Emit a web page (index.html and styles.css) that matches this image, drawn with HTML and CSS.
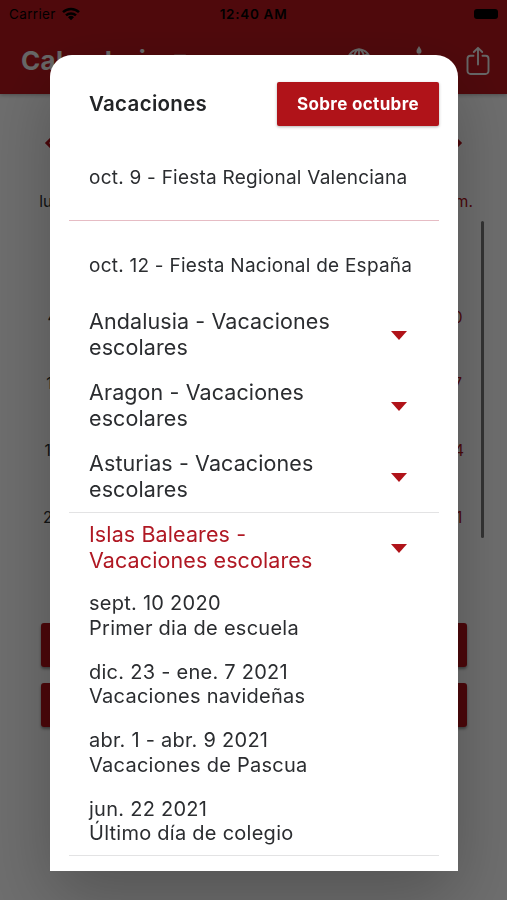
FILE: index.html
```html
<!DOCTYPE html>
<html lang="es">
<head>
    <meta charset="UTF-8">
    <meta name="viewport" content="width=device-width, initial-scale=1.0">
    <title>Calendario</title>
    <link rel="stylesheet" href="styles.css">
</head>
<body>
    <div class="app">
        <header class="header">
            <div class="status-bar">
                <div class="carrier">
                    <span>Carrier</span>
                    <svg width="18" height="14" viewBox="0 0 18 14" fill="none" stroke="#000" stroke-width="2.5">
                        <path d="M1 5.2a11.5 11.5 0 0 1 16 0"/>
                        <path d="M4 8.4a7.3 7.3 0 0 1 10 0"/>
                        <path d="M9 13.3l-3-3.1a4.3 4.3 0 0 1 6 0z" fill="#000" stroke="none"/>
                    </svg>
                </div>
                <span class="time">12:40 AM</span>
                <div class="battery-wrap"><span class="battery"></span></div>
            </div>
            <div class="toolbar">
                <h1>Calendario</h1>
                <svg class="title-arrow" width="12" height="7" viewBox="0 0 12 7"><path d="M0 .6h12L6 7z" fill="#caa"/></svg>
                <div class="actions">
                    <svg width="26" height="26" viewBox="0 0 26 26" fill="none" stroke="#eee" stroke-width="1.8">
                        <circle cx="13" cy="13" r="11.5"/>
                        <ellipse cx="13" cy="13" rx="5.5" ry="11.5"/>
                        <path d="M13 1.5v23M1.5 13h23M4 6c5 3 13 3 18 0M4 20c5-3 13-3 18 0"/>
                    </svg>
                    <svg width="26" height="30" viewBox="0 0 26 30" fill="#eee">
                        <path d="M13 0c1.500 2.500 2.500 3.600 2.500 5.200a2.500 2.500 0 0 1-5 0C10.500 3.600 11.500 2.500 13 0z"/>
                        <path d="M12.200 8.500h1.600V14h-1.600zM3 14h20v14H3z"/>
                    </svg>
                    <svg width="24" height="30" viewBox="0 0 24 30" fill="none" stroke="#eee" stroke-width="1.9" stroke-linecap="round" stroke-linejoin="round">
                        <path d="M7.500 9.800H4.500a3 3 0 0 0-3 3V25a3 3 0 0 0 3 3h15a3 3 0 0 0 3-3V12.800a3 3 0 0 0-3-3h-3"/>
                        <path d="M12 18.500V2M7.800 6L12 1.800 16.200 6"/>
                    </svg>
                </div>
            </div>
        </header>

        <div class="month-nav">
            <svg width="8" height="12" viewBox="0 0 8 12" fill="none" stroke="#b01018" stroke-width="3"><path d="M7 2L3 6l4 4"/></svg>
            <svg width="8" height="12" viewBox="0 0 8 12" fill="none" stroke="#b01018" stroke-width="3"><path d="M1 2l4 4-4 4"/></svg>
        </div>

        <div class="weekdays">
            <span>lun.</span><span>mar.</span><span>mié.</span><span>jue.</span><span>vie.</span><span>sáb.</span><span class="sunday">dom.</span>
        </div>
        <div class="month">
            <div class="days">
                <span></span><span></span><span></span><span></span><span>1</span><span>2</span><span></span>
                <span>4</span><span>5</span><span>6</span><span>7</span><span>8</span><span>9</span><span class="sunday">10</span>
                <span>11</span><span>12</span><span>13</span><span>14</span><span>15</span><span>16</span><span class="sunday">17</span>
                <span>18</span><span>19</span><span>20</span><span>21</span><span>22</span><span>23</span><span class="sunday">24</span>
                <span>25</span><span>26</span><span>27</span><span>28</span><span>29</span><span>30</span><span class="sunday">31</span>
            </div>
            <div class="scrollbar"></div>
        </div>

        <div class="page-buttons">
            <div class="page-button"></div>
            <div class="page-button"></div>
        </div>
    </div>

    <div class="overlay">
        <div class="modal">
            <div class="modal-header">
                <h2>Vacaciones</h2>
                <button class="about-button">Sobre octubre</button>
            </div>

            <div class="holiday first">oct. 9 - Fiesta Regional Valenciana</div>
            <div class="holiday">oct. 12 - Fiesta Nacional de España</div>

            <div class="region">
                <span>Andalusia - Vacaciones escolares</span>
                <i class="arrow"></i>
            </div>
            <div class="region">
                <span>Aragon - Vacaciones escolares</span>
                <i class="arrow"></i>
            </div>
            <div class="region">
                <span>Asturias - Vacaciones escolares</span>
                <i class="arrow"></i>
            </div>

            <div class="open-region">
                <div class="region active">
                    <span>Islas Baleares - Vacaciones escolares</span>
                    <i class="arrow"></i>
                </div>
                <div class="event">
                    <p>sept. 10 2020</p>
                    <p>Primer dia de escuela</p>
                </div>
                <div class="event">
                    <p>dic. 23 - ene. 7 2021</p>
                    <p>Vacaciones navideñas</p>
                </div>
                <div class="event">
                    <p>abr. 1 - abr. 9 2021</p>
                    <p>Vacaciones de Pascua</p>
                </div>
                <div class="event">
                    <p>jun. 22 2021</p>
                    <p>Último día de colegio</p>
                </div>
            </div>
        </div>
    </div>
</body>
</html>
```

FILE: styles.css
```css
* {
    box-sizing: border-box;
}
body {
    margin: 0;
    height: 900px;
    overflow: hidden;
    font-family: Inter, "Liberation Sans", sans-serif;
    color: #2b2d30;
    background: #fff;
}
h1, h2, p {
    margin: 0;
}

/* page behind the dialog */
.header {
    height: 94px;
    background: #b8171d;
    box-shadow: 0 1px 4px rgba(0,0,0,0.3);
}
.status-bar {
    display: grid;
    grid-template-columns: 1fr auto 1fr;
    align-items: center;
    height: 27px;
    padding: 0 9px;
    font-size: 13.5px;
    color: #000;
}
.carrier {
    display: flex;
    align-items: center;
    gap: 6px;
    letter-spacing: 0.35px;
}
.time {
    font-weight: 600;
    letter-spacing: 0.7px;
}
.battery-wrap {
    display: flex;
    justify-content: flex-end;
}
.battery {
    width: 24px;
    height: 10px;
    border-radius: 3px;
    background: #000;
}
.toolbar {
    display: flex;
    align-items: center;
    height: 67px;
    padding: 0 17px 0 21px;
}
.toolbar h1 {
    color: #eee;
    font-size: 26px;
    font-weight: 700;
    letter-spacing: 0.3px;
}
.title-arrow {
    margin-left: 12px;
    margin-bottom: 6px;
}
.actions {
    display: flex;
    align-items: center;
    gap: 34px;
    margin-left: auto;
}
.month-nav {
    display: flex;
    justify-content: space-between;
    padding: 43px 44px 0;
}
.weekdays, .days {
    display: grid;
    grid-template-columns: repeat(7, 67px);
    padding: 0 19px;
    text-align: center;
    font-size: 15.5px;
}
.weekdays {
    padding-top: 43px;
    height: 69px;
}
.month {
    display: flex;
    height: 405px;
}
.days {
    grid-auto-rows: 66.7px;
    line-height: 66px;
    padding: 0 0 0 19px;
}
.month .scrollbar {
    width: 3px;
    height: 317px;
    margin: 3px 0 0 -7px;
    border-radius: 2px;
    background: #777;
}
.sunday {
    color: #b01018;
}
.page-buttons {
    display: grid;
    gap: 16px;
    padding: 0 40px 0 41px;
}
.page-button {
    height: 44px;
    border-radius: 3px;
    background: #b01018;
    box-shadow: 0 2px 3px rgba(0,0,0,0.4);
}

/* dialog */
.overlay {
    position: fixed;
    inset: 0;
    padding: 55px 49px 29px 50px;
    background: rgba(0,0,0,0.57);
}
.modal {
    height: 816px;
    padding: 26px 19px 0;
    border-radius: 22px 22px 0 0;
    background: #fff;
    box-shadow: 0 26px 70px rgba(0,0,0,0.25);
}
.modal-header {
    display: flex;
    justify-content: space-between;
    align-items: center;
    height: 45px;
    padding-left: 20px;
}
.modal-header h2 {
    font-size: 20.5px;
    font-weight: 600;
    letter-spacing: 0.3px;
    color: #222426;
}
.about-button {
    width: 162px;
    height: 44px;
    padding: 0;
    border: none;
    border-radius: 2px;
    background: #b01319;
    color: #fff;
    font: 700 17px Inter, sans-serif;
    letter-spacing: 0.35px;
    box-shadow: 0 1px 3px rgba(0,0,0,0.3);
}
.holiday {
    height: 88px;
    padding-left: 20px;
    font-size: 19px;
    line-height: 90px;
    letter-spacing: 0.24px;
    white-space: nowrap;
}
.holiday.first {
    height: 95px;
    line-height: 104px;
    border-bottom: 1px solid #e6bcc4;
}
.region {
    display: flex;
    justify-content: space-between;
    align-items: center;
    height: 71px;
    padding: 0 31px 0 20px;
    font-size: 21.5px;
    line-height: 25.6px;
    letter-spacing: 0.1px;
}
.region span {
    width: 260px;
    padding-bottom: 1px;
}
.region:nth-of-type(4) {
    margin-top: -9px;
}
.arrow {
    margin-right: 1px;
    border: 8.5px solid transparent;
    border-top: 9px solid #b01319;
    border-bottom: 0;
}
.open-region {
    height: 344px;
    margin-top: -1px;
    border-top: 1px solid #e3e3e4;
    border-bottom: 1px solid #e3e3e4;
}
.active {
    height: 70px;
    color: #b01823;
}
.event {
    padding: 8.300px 20px 11px;
    font-size: 20px;
    line-height: 24.6px;
    letter-spacing: 0.26px;
}
```
